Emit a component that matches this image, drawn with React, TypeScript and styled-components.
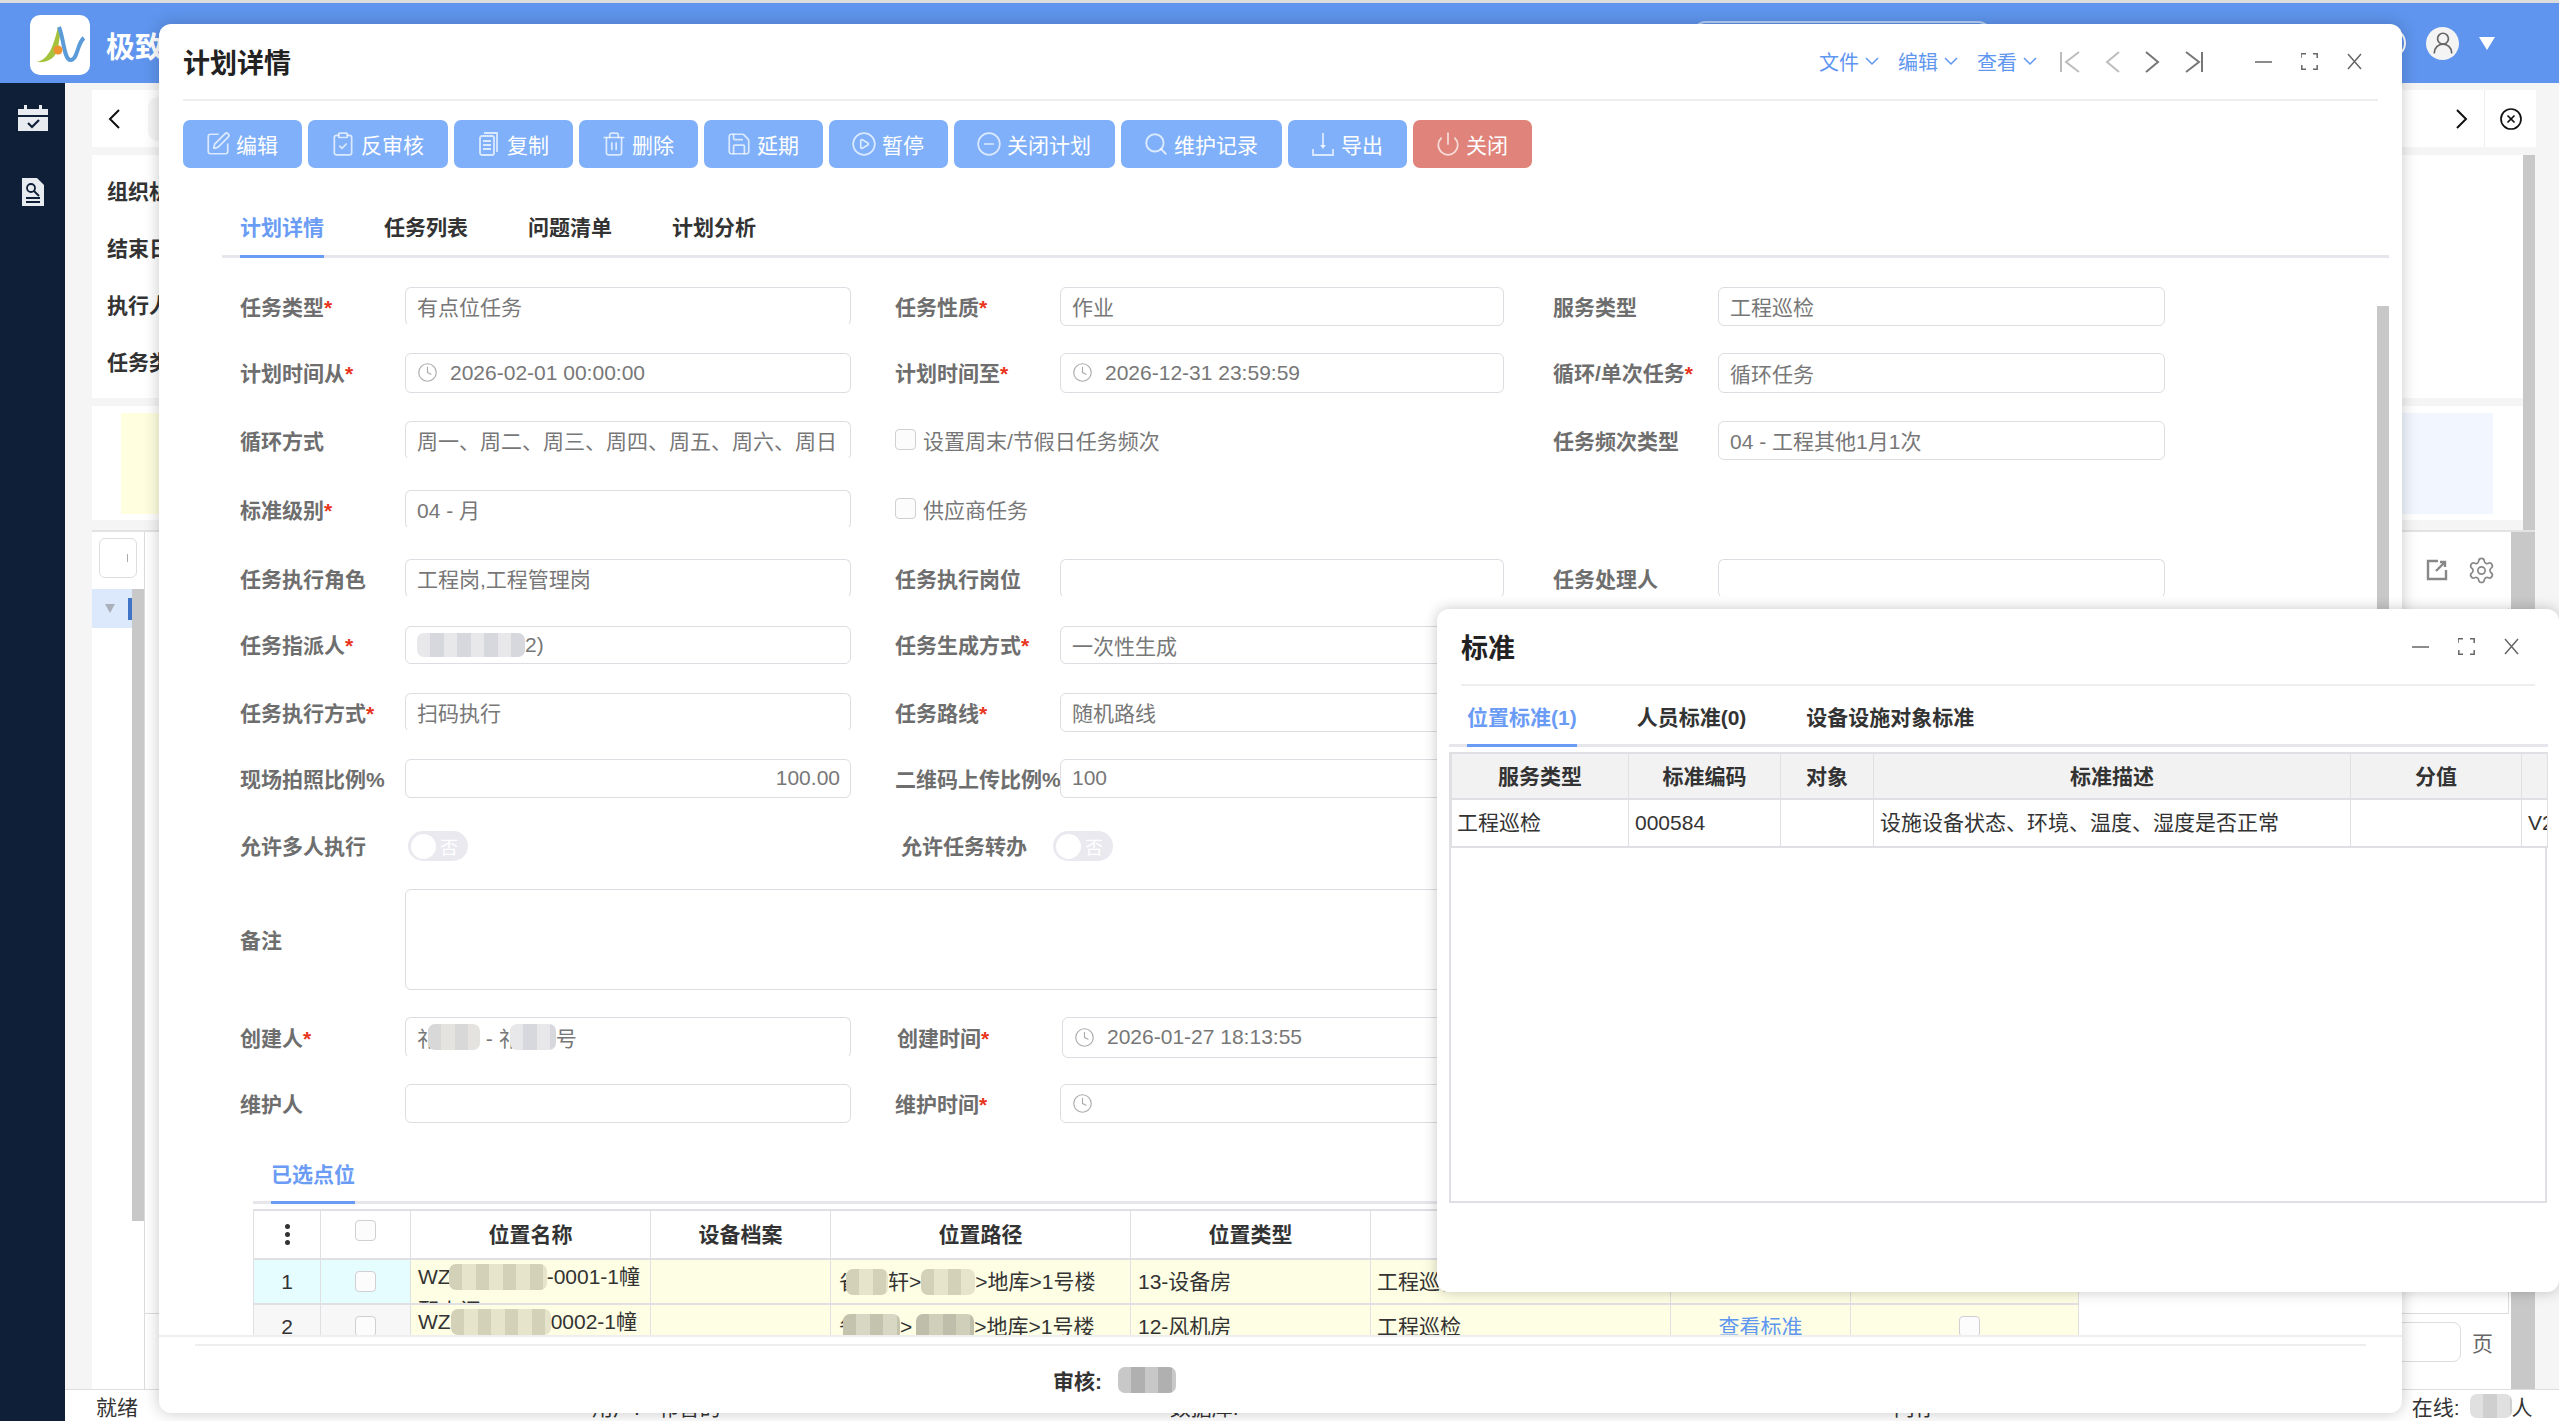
import { FC, ReactNode } from 'react';
import {
  CircleMinus,
  CirclePlay,
  CircleX,
  ClipboardCheck,
  Clock,
  Power,
  Save,
  Search,
  Settings,
  SquarePen,
  Trash2,
  UserRound,
} from 'lucide-react';
import styled, { createGlobalStyle } from 'styled-components';

const GlobalStyle = createGlobalStyle`
  html, body {
    margin: 0;
    padding: 0;
    background: #f5f5f5;
  }
  * {
    box-sizing: border-box;
  }
  body {
    font-family: "Liberation Sans", "Noto Sans CJK SC", sans-serif;
    font-size: 21px;
    color: #333;
  }
`;

const Page = styled.div`
  position: relative;
  display: flex;
  flex-direction: column;
  width: 2559px;
  height: 1421px;
  overflow: hidden;
  background: #f5f5f5;
`;

/* ---------- app shell behind the dialogs ---------- */

const Header = styled.header`
  display: flex;
  flex: none;
  align-items: center;
  height: 83px;
  padding-right: 64px;
  border-top: 3px solid #dcdcdc;
  background: #5f95ee;
`;

const Logo = styled.svg`
  flex: none;
  width: 60px;
  height: 60px;
  margin: 4px 0 0 30px;
`;

const Brand = styled.div`
  margin: 4px 0 0 16px;
  font-size: 29px;
  font-weight: 700;
  color: #fff;
  white-space: nowrap;
`;

const SearchPill = styled.div`
  width: 300px;
  height: 44px;
  margin: 0 384px 0 auto;
  border: 2px solid #b9d2f8;
  border-radius: 14px;
`;

const HeaderDot = styled.div`
  width: 30px;
  height: 30px;
  margin-right: 20px;
  border: 2px solid #fff;
  border-radius: 50%;
`;

const Avatar = styled.div`
  display: flex;
  align-items: center;
  justify-content: center;
  width: 33px;
  height: 33px;
  border-radius: 50%;
  background: #f4f4f4;
  color: #666;
`;

const Caret = styled.div`
  width: 0;
  height: 0;
  margin-left: 20px;
  border-top: 13px solid #fff;
  border-right: 8px solid transparent;
  border-left: 8px solid transparent;
`;

const Body = styled.div`
  display: flex;
  flex: 1;
  min-height: 0;
`;

const Sidebar = styled.nav`
  display: flex;
  flex: none;
  flex-direction: column;
  align-items: center;
  gap: 46px;
  width: 65px;
  padding-top: 22px;
  background: #0f1f38;
`;

const Main = styled.main`
  display: flex;
  flex: 1;
  flex-direction: column;
  min-width: 0;
`;

const TabStrip = styled.div`
  display: flex;
  flex: none;
  align-items: center;
  height: 57px;
  margin: 7px 23px 8px 27px;
  background: #fff;
`;

const BackArrow = styled.svg`
  margin-left: 16px;
`;

const TabChip = styled.div`
  width: 100px;
  height: 44px;
  margin-left: 28px;
  border-radius: 10px;
  background: #f5f5f5;
`;

const StripSpacer = styled.div`
  flex: 1;
`;

const StripEnd = styled.div`
  display: flex;
  align-items: center;
  justify-content: center;
  width: 52px;
  height: 100%;
  margin-left: 16px;
  border-left: 1px solid #eee;
  color: #111;
`;

const UpperArea = styled.div`
  display: flex;
  flex: none;
  height: 375px;
  margin: 0 24px 0 27px;
`;

const UpperPanels = styled.div`
  display: flex;
  flex: 1;
  flex-direction: column;
  min-width: 0;
`;

const SearchPanel = styled.div`
  display: flex;
  flex: none;
  flex-direction: column;
  height: 243px;
  margin-bottom: 8px;
  padding: 20px 0 0 15px;
  background: #fff;
  overflow: hidden;
`;

const SearchLabel = styled.div`
  flex: none;
  height: 57px;
  line-height: 34px;
  font-weight: 700;
  color: #333;
`;

const SummaryPanel = styled.div`
  display: flex;
  justify-content: space-between;
  height: 114px;
  padding: 7px 30px 6px 29px;
  background: #fff;
`;

const SummaryBox = styled.div<{ $color: string }>`
  width: 120px;
  background: ${({ $color }) => $color};
`;

const ScrollTrack = styled.div<{ $w: number }>`
  flex: none;
  width: ${({ $w }) => $w}px;
  background: #c8c8c8;
`;

const Workspace = styled.div`
  display: flex;
  flex: 1;
  min-height: 0;
  margin: 0 24px 0 27px;
  border-top: 2px solid #e3e3e3;
`;

const TreePane = styled.div`
  position: relative;
  flex: none;
  width: 53px;
  padding-top: 6px;
  border-right: 1px solid #ddd;
  background: #fff;
`;

const TreeButton = styled.div`
  display: flex;
  align-items: center;
  justify-content: flex-end;
  width: 38px;
  height: 40px;
  margin-left: 7px;
  padding-right: 8px;
  border: 1px solid #ddd;
  border-radius: 6px;

  &::after {
    width: 1px;
    height: 8px;
    background: #aaa;
    content: '';
  }
`;

const TreeRow = styled.div`
  display: flex;
  align-items: center;
  justify-content: space-between;
  width: 40px;
  height: 39px;
  margin-top: 11px;
  padding-left: 13px;
  background: #dce9fc;
`;

const TreeCaret = styled.div`
  width: 0;
  height: 0;
  border-top: 9px solid #a9b0ba;
  border-right: 5px solid transparent;
  border-left: 5px solid transparent;
`;

const TreeMark = styled.div`
  width: 4px;
  height: 22px;
  background: #3f74c9;
`;

const TreeScroll = styled.div`
  position: absolute;
  top: 57px;
  right: 0;
  width: 12px;
  height: 632px;
  background: #c8c8c8;
`;

const ContentPane = styled.div`
  display: flex;
  flex: 1;
  flex-direction: column;
  min-width: 0;
  background: #fff;
`;

const ToolIcons = styled.div`
  display: flex;
  flex: none;
  align-items: center;
  justify-content: flex-end;
  gap: 19px;
  height: 76px;
  padding: 0 15px 0 0;
  color: #888;
`;

const ListBox = styled.div`
  flex: 1;
  margin-right: 2px;
  border-right: 1px solid #ddd;
  border-bottom: 1px solid #ddd;
`;

const Pager = styled.div`
  display: flex;
  flex: none;
  align-items: center;
  gap: 11px;
  justify-content: flex-end;
  height: 75px;
  padding: 0 18px 19px 0;
  color: #666;
`;

const PagerInput = styled.div`
  width: 200px;
  height: 40px;
  border: 1px solid #ddd;
  border-radius: 8px;
`;

const StatusBar = styled.footer`
  display: flex;
  flex: none;
  align-items: center;
  height: 32px;
  padding-left: 31px;
  border-top: 1px solid #ddd;
  background: #fff;
  color: #333;
  white-space: nowrap;
`;

const StatusItem = styled.span<{ $ml?: number }>`
  margin-left: ${({ $ml = 0 }) => $ml}px;
`;

/* ---------- floating windows ---------- */

const Dialog = styled.section`
  position: absolute;
  top: 24px;
  left: 159px;
  display: flex;
  flex-direction: column;
  width: 2243px;
  height: 1389px;
  border-radius: 12px;
  background: #fff;
  box-shadow: 0 0 16px rgba(0, 0, 0, 0.22);
  overflow: hidden;
`;

const StandardWindow = styled.section`
  position: absolute;
  top: 609px;
  left: 1437px;
  display: flex;
  flex-direction: column;
  width: 1122px;
  height: 683px;
  border-radius: 12px;
  background: #fff;
  box-shadow: 0 0 14px rgba(0, 0, 0, 0.22);
  overflow: hidden;
`;

const WindowHead = styled.div`
  display: flex;
  flex: none;
  align-items: center;
  height: 77px;
  margin: 0 24px;
  border-bottom: 2px solid #eee;
`;

const WindowTitle = styled.h2`
  flex: 1;
  margin: 0;
  font-size: 27px;
  font-weight: 700;
  color: #222;
`;

const MenuLink = styled.div`
  display: flex;
  align-items: center;
  gap: 6px;
  margin-right: 19px;
  font-size: 20px;
  color: #5f96f0;
`;

const NavGroup = styled.div`
  display: flex;
  align-items: center;
  gap: 25px;
  margin: 0 52px 0 4px;
`;

const WindowActions = styled.div`
  display: flex;
  align-items: center;
  gap: 29px;
  margin-right: 16px;
  color: #666;
`;

const Toolbar = styled.div`
  display: flex;
  flex: none;
  gap: 6px;
  margin: 19px 0 0 24px;
`;

const ActionButton = styled.button<{ $danger?: boolean }>`
  display: flex;
  align-items: center;
  gap: 7px;
  height: 48px;
  padding: 0 24px;
  border: 0;
  border-radius: 7px;
  background: ${({ $danger }) => ($danger ? '#e0837a' : '#7fb0f9')};
  color: #fff;
  font: inherit;

  svg {
    width: 26px;
    height: 26px;
    margin: 0 -2px;
    color: rgba(255, 255, 255, 0.72);
  }
`;

type TTabBar = {
  $h: number;
  $top: number;
  $left: number;
  $right: number;
  $pad: number;
  $lift: number;
};
const TabBar = styled.div<TTabBar>`
  display: flex;
  flex: none;
  gap: 60px;
  height: ${({ $h }) => $h}px;
  margin: ${({ $top, $right, $left }) => `${$top}px ${$right}px 0 ${$left}px`};
  padding-left: ${({ $pad }) => $pad}px;
  border-bottom: 3px solid #e6e6ec;

  & > div {
    padding-bottom: ${({ $lift }) => $lift}px;
  }
`;

const Tab = styled.div<{ $active?: boolean }>`
  display: flex;
  align-items: center;
  height: calc(100% + 3px);
  border-bottom: 3px solid ${({ $active }) => ($active ? '#6b9cf5' : 'transparent')};
  font-weight: 700;
  color: ${({ $active }) => ($active ? '#6b9cf5' : '#333')};
  white-space: nowrap;
`;

const ScrollBody = styled.div`
  position: relative;
  flex: 1;
  min-height: 0;
  overflow: hidden;
`;

const ScrollThumb = styled.div`
  position: absolute;
  top: 48px;
  right: 13px;
  width: 12px;
  height: 880px;
  background: #c8c8c8;
`;

const Form = styled.div`
  display: flex;
  flex-direction: column;
  padding: 29px 0 0 81px;
`;

const FormRow = styled.div<{ $h: number; $gap: number }>`
  display: grid;
  flex: none;
  grid-template-columns: 655px 658px 612px;
  height: ${({ $h }) => $h}px;
  margin-bottom: ${({ $gap }) => $gap}px;
`;

const Field = styled.div<{ $wide?: boolean; $nudge?: number }>`
  display: grid;
  grid-column: ${({ $wide }) => ($wide ? '1 / -1' : 'auto')};
  grid-template-columns: 165px 1fr;
  align-items: center;
  margin-left: ${({ $nudge = 0 }) => $nudge}px;
  padding-right: ${({ $wide }) => ($wide ? '47px' : '0')};

  &:nth-child(1) {
    padding-right: ${({ $wide }) => ($wide ? '47px' : '44px')};
  }
  &:nth-child(2) {
    padding-right: 49px;
  }
  &:nth-child(3) {
    width: 612px;
  }
`;

const Label = styled.label<{ $inset?: number }>`
  padding-bottom: 2px;
  padding-left: ${({ $inset = 0 }) => $inset}px;
  font-weight: 700;
  color: #6e6e6e;
  white-space: nowrap;
`;

const Required = styled.span`
  font-weight: 700;
  color: #e8341c;
`;

const InputBox = styled.div<{ $open?: boolean; $right?: boolean }>`
  display: flex;
  align-items: center;
  justify-content: ${({ $right }) => ($right ? 'flex-end' : 'flex-start')};
  gap: 12px;
  height: 100%;
  padding: 0 ${({ $right }) => ($right ? '10px' : '11px')} 1px 11px;
  border: 1px solid #dcdce2;
  border-bottom-color: ${({ $open }) => ($open ? 'transparent' : '#dcdce2')};
  border-radius: 6px;
  color: #777;
  white-space: nowrap;
  overflow: hidden;

  svg {
    flex: none;
    color: #aaa;
  }
`;

const InputText = styled.span`
  display: inline-flex;
  align-items: center;
`;

const CheckRow = styled.div`
  display: flex;
  grid-column: 1 / -1;
  align-items: center;
  gap: 7px;
  padding-bottom: 2px;
  color: #777;
`;

const Check = styled.span<{ $ml?: number }>`
  display: inline-block;
  flex: none;
  width: 21px;
  height: 21px;
  margin-left: ${({ $ml = 0 }) => $ml}px;
  border: 1px solid #cfcfd4;
  border-radius: 4px;
  background: #fcfcfc;
`;

const Toggle = styled.div<{ $shift?: number }>`
  display: flex;
  align-items: center;
  justify-content: space-between;
  width: 60px;
  height: 30px;
  margin-left: ${({ $shift = 3 }) => $shift}px;
  padding: 0 10px 0 3px;
  border-radius: 15px;
  background: #e9e9ef;
  color: #fff;
  font-size: 18px;
`;

const ToggleKnob = styled.span`
  width: 25px;
  height: 25px;
  border-radius: 50%;
  background: #fff;
`;

const Blur = styled.span<{ $w: number; $ml?: number; $a: string; $b: string; $h?: number }>`
  display: inline-block;
  flex: none;
  width: ${({ $w }) => $w}px;
  height: ${({ $h = 26 }) => $h}px;
  margin-left: ${({ $ml = 0 }) => $ml}px;
  border-radius: 7px;
  background-color: ${({ $a }) => $a};
  background-image: repeating-linear-gradient(
    90deg,
    ${({ $b }) => $b} 0 13px,
    transparent 13px 27px
  );
  vertical-align: middle;
`;

const GridWrap = styled.div<{ $w: number; $left: number; $top: number }>`
  flex: none;
  width: ${({ $w }) => $w}px;
  margin: ${({ $top, $left }) => `${$top}px 0 0 ${$left}px`};
`;

const GridTable = styled.table`
  width: 100%;
  border-collapse: collapse;
  table-layout: fixed;
`;

const HeadCell = styled.th<{ $shaded?: boolean; $h: number }>`
  height: ${({ $h }) => $h}px;
  padding: 0 0 3px;
  border: 2px solid #e0e0e4;
  border-width: 2px 1px;
  background: ${({ $shaded }) => ($shaded ? '#f2f2f2' : '#fff')};
  font-weight: 700;
  color: #333;
  text-align: center;
  vertical-align: middle;
`;

const Cell = styled.td<{ $bg?: string; $center?: boolean }>`
  padding: 0;
  border: 1px solid #e0e0e4;
  border-bottom-width: 2px;
  background: ${({ $bg }) => $bg || '#fff'};
  color: #333;
  text-align: ${({ $center }) => ($center ? 'center' : 'left')};
`;

const CellBody = styled.div<{ $h: number; $pad?: number; $top?: boolean }>`
  display: flex;
  flex-wrap: ${({ $top }) => ($top ? 'wrap' : 'nowrap')};
  align-items: ${({ $top }) => ($top ? 'flex-start' : 'center')};
  align-content: flex-start;
  justify-content: ${({ $pad }) => ($pad === undefined ? 'center' : 'flex-start')};
  height: ${({ $h }) => $h}px;
  padding-left: ${({ $pad = 0 }) => $pad}px;
  line-height: 34px;
  white-space: nowrap;
  overflow: hidden;
`;

const LinkText = styled.span`
  color: #5f96f0;
`;

const MoreDots = styled.span`
  display: inline-flex;
  flex-direction: column;
  gap: 3px;
  vertical-align: middle;

  i {
    display: block;
    width: 5px;
    height: 5px;
    border-radius: 50%;
    background: #333;
  }
`;

const DialogFooter = styled.div`
  flex: none;
  height: 78px;
  padding: 7px 36px 0;
  border-top: 2px solid #eee;
`;

const FooterInner = styled.div`
  display: flex;
  align-items: center;
  gap: 6px;
  height: 69px;
  padding-left: 858px;
  border-top: 2px solid #eee;
  font-weight: 700;
  color: #333;
`;

const StandardGrid = styled.div`
  flex: none;
  width: 1098px;
  height: 451px;
  margin: 5px 0 0 12px;
  border: 2px solid #e0e0e4;
  border-top: 0;
`;

/* ---------- drawings ---------- */

const Line: FC<{ w: number; h: number; d: string; color?: string; sw?: number }> = ({
  w,
  h,
  d,
  color = 'currentColor',
  sw = 1.5,
}) => (
  <svg width={w} height={h} viewBox={`0 0 ${w} ${h}`} fill="none" stroke={color} strokeWidth={sw}>
    <path d={d} />
  </svg>
);

const CopyIcon = () => (
  <svg viewBox="0 0 26 26" fill="none" stroke="currentColor" strokeWidth="1.8">
    <path d="M8 2h13v19" />
    <rect x="4" y="5" width="14" height="19" rx="2" />
    <path d="M7 10h8M7 14h8M7 18h8" />
  </svg>
);

const ExportIcon = () => (
  <svg viewBox="0 0 26 26" fill="none" stroke="currentColor" strokeWidth="1.8">
    <path d="M13 2v14" />
    <path d="M10 14h6l-3 4z" fill="currentColor" stroke="none" />
    <path d="M3 18v6h20v-6" />
  </svg>
);

const CalendarIcon = () => (
  <svg width="30" height="27" viewBox="0 0 30 27">
    <path d="M0 4h6V0h3v4h12V0h3v4h6v6H0z" fill="#e8ebf0" />
    <path d="M0 12h30v14H0z" fill="#e8ebf0" />
    <path d="M10 18l4 4 7-7" fill="none" stroke="#0f1f38" strokeWidth="2.2" />
  </svg>
);

const ReportIcon = () => (
  <svg width="22" height="28" viewBox="0 0 22 28">
    <path d="M0 0h15l7 7v21H0z" fill="#e8ebf0" />
    <circle cx="9" cy="10" r="4" fill="none" stroke="#0f1f38" strokeWidth="1.8" />
    <path d="M12 13l5 5M4 20h14M4 24h14" stroke="#0f1f38" strokeWidth="1.8" />
  </svg>
);

const OpenIcon = () => (
  <svg width="22" height="22" viewBox="0 0 22 22" fill="none" stroke="currentColor" strokeWidth="2.4">
    <path d="M12 2H2v18h18v-9" />
    <path d="M10 12l8-8M14 3h5v5" />
  </svg>
);

const WindowButtons = () => (
  <WindowActions>
    <Line w={17} h={4} d="M0 2h17" />
    <Line
      w={17}
      h={17}
      d="M0 5V.8h5M12 .8h4.2V5M16.2 12v4.2H12M5 16.2H.8V12"
    />
    <Line w={15} h={17} d="M1 1l13 15M14 1L1 16" />
  </WindowActions>
);

/* ---------- data ---------- */

const buttons: { text: string; icon: ReactNode; danger?: boolean }[] = [
  { text: '编辑', icon: <SquarePen strokeWidth={1.6} /> },
  { text: '反审核', icon: <ClipboardCheck strokeWidth={1.6} /> },
  { text: '复制', icon: <CopyIcon /> },
  { text: '删除', icon: <Trash2 strokeWidth={1.6} /> },
  { text: '延期', icon: <Save strokeWidth={1.6} /> },
  { text: '暂停', icon: <CirclePlay strokeWidth={1.6} /> },
  { text: '关闭计划', icon: <CircleMinus strokeWidth={1.6} /> },
  { text: '维护记录', icon: <Search strokeWidth={1.8} /> },
  { text: '导出', icon: <ExportIcon /> },
  { text: '关闭', icon: <Power strokeWidth={1.6} />, danger: true },
];

type TInput = {
  label: string;
  required?: boolean;
  value?: ReactNode;
  date?: boolean;
  open?: boolean;
  right?: boolean;
  nudge?: number;
};

const gray = { $a: '#d6d8de', $b: '#e8e8ea' };
const pale = { $a: '#e4e3e0', $b: '#d8d8d8' };

const input = (
  label: string,
  value?: ReactNode,
  opts: Partial<TInput> = {},
): TInput => ({ label, value, ...opts });

const req = { required: true };

type TRow = {
  h: number;
  gap: number;
  inputs?: (TInput | null)[];
  checks?: [TInput, string | null];
};

const rows: TRow[] = [
  {
    h: 39,
    gap: 27,
    inputs: [
      input('任务类型', '有点位任务', { ...req, open: true }),
      input('任务性质', '作业', req),
      input('服务类型', '工程巡检'),
    ],
  },
  {
    h: 40,
    gap: 28,
    inputs: [
      input('计划时间从', '2026-02-01 00:00:00', { ...req, date: true }),
      input('计划时间至', '2026-12-31 23:59:59', { ...req, date: true }),
      input('循环/单次任务', '循环任务', req),
    ],
  },
  {
    h: 39,
    gap: 30,
    checks: [
      input('循环方式', '周一、周二、周三、周四、周五、周六、周日', { open: true }),
      '设置周末/节假日任务频次',
    ],
    inputs: [input('任务频次类型', '04 - 工程其他1月1次')],
  },
  {
    h: 39,
    gap: 30,
    checks: [input('标准级别', '04 - 月', { ...req, open: true }), '供应商任务'],
    inputs: [null],
  },
  {
    h: 39,
    gap: 28,
    inputs: [
      input('任务执行角色', '工程岗,工程管理岗', { open: true }),
      input('任务执行岗位', undefined, { open: true }),
      input('任务处理人', undefined, { open: true }),
    ],
  },
  {
    h: 38,
    gap: 29,
    inputs: [
      input(
        '任务指派人',
        <InputText>
          <Blur $w={108} $h={24} {...gray} />
          2)
        </InputText>,
        req,
      ),
      input('任务生成方式', '一次性生成', req),
    ],
  },
  {
    h: 39,
    gap: 27,
    inputs: [
      input('任务执行方式', '扫码执行', { ...req, open: true }),
      input('任务路线', '随机路线', req),
    ],
  },
  {
    h: 39,
    gap: 32,
    inputs: [
      input('现场拍照比例%', '100.00', { right: true }),
      input('二维码上传比例%', '100'),
    ],
  },
];

const lowerRows: { h: number; gap: number; inputs: TInput[] }[] = [
  {
    h: 41,
    gap: 26,
    inputs: [
      input(
        '创建人',
        <InputText>
          祁
          <Blur $w={52} $ml={-10} {...pale} />
          <span>&nbsp;-&nbsp;祁</span>
          <Blur $w={46} $ml={-10} {...gray} />号
        </InputText>,
        { ...req, open: true },
      ),
      input('创建时间', '2026-01-27 18:13:55', { ...req, date: true, nudge: 2 }),
    ],
  },
  {
    h: 39,
    gap: 24,
    inputs: [input('维护人'), input('维护时间', undefined, { ...req, date: true })],
  },
];

const cream = { $a: '#e6e5cc', $b: '#d3d2b8' };
const YELLOW = '#fefee4';

const pointColumns = [67, 90, 240, 180, 300, 240, 300, 180, 228];
const pointHeads = ['位置名称', '设备档案', '位置路径', '位置类型', '服务类型', '', ''];

const standardColumns = [177, 152, 93, 477, 171, 26];

const FormInput: FC<{ item: TInput }> = ({ item }) => (
  <>
    <Label>
      {item.label}
      {item.required && <Required>*</Required>}
    </Label>
    <InputBox $open={item.open} $right={item.right}>
      {item.date && <Clock size={21} strokeWidth={1.3} />}
      {item.value}
    </InputBox>
  </>
);

const App: FC = () => {
  return (
    <Page>
      <GlobalStyle />
      <Header>
        <Logo viewBox="0 0 60 60">
          <rect width="60" height="60" rx="10" fill="#fff" />
          <path d="M28 12C24 28 20 44 7 47c11 1 19-4 21-14l3-19z" fill="#a6c23c" />
          <path
            d="M29 12c5 12 5 34 12 33 7-1 6-17 13-22"
            fill="none"
            stroke="#5b9bd8"
            strokeWidth="4"
          />
          <circle cx="28" cy="35" r="4.5" fill="#ee9330" />
        </Logo>
        <Brand>极致运维</Brand>
        <SearchPill />
        <HeaderDot />
        <Avatar>
          <UserRound size={26} strokeWidth={1.6} />
        </Avatar>
        <Caret />
      </Header>
      <Body>
        <Sidebar>
          <CalendarIcon />
          <ReportIcon />
        </Sidebar>
        <Main>
          <TabStrip>
            <BackArrow width="12" height="20" viewBox="0 0 12 20" fill="none" stroke="#111" strokeWidth="2">
              <path d="M11 1L2 10l9 9" />
            </BackArrow>
            <TabChip />
            <StripSpacer />
            <Line w={12} h={20} d="M1 1l9 9-9 9" color="#111" sw={2} />
            <StripEnd>
              <CircleX size={24} strokeWidth={1.7} />
            </StripEnd>
          </TabStrip>
          <UpperArea>
            <UpperPanels>
              <SearchPanel>
                <SearchLabel>组织机构</SearchLabel>
                <SearchLabel>结束日期</SearchLabel>
                <SearchLabel>执行人</SearchLabel>
                <SearchLabel>任务类型</SearchLabel>
              </SearchPanel>
              <SummaryPanel>
                <SummaryBox $color="#ffffe0" />
                <SummaryBox $color="#f2f7ff" />
              </SummaryPanel>
            </UpperPanels>
            <ScrollTrack $w={12} />
          </UpperArea>
          <Workspace>
            <TreePane>
              <TreeButton />
              <TreeRow>
                <TreeCaret />
                <TreeMark />
              </TreeRow>
              <TreeScroll />
            </TreePane>
            <ContentPane>
              <ToolIcons>
                <OpenIcon />
                <Settings size={29} strokeWidth={1.4} />
              </ToolIcons>
              <ListBox />
              <Pager>
                <PagerInput />页
              </Pager>
            </ContentPane>
            <ScrollTrack $w={24} />
          </Workspace>
          <StatusBar>
            <StatusItem>就绪</StatusItem>
            <StatusItem $ml={454}>用户:</StatusItem>
            <StatusItem $ml={18}>祁普的</StatusItem>
            <StatusItem $ml={449}>数据库:</StatusItem>
            <StatusItem $ml={655}>内存</StatusItem>
            <StatusItem $ml={476}>在线:</StatusItem>
            <Blur $w={42} $h={24} $ml={10} $a="#cfcfcf" $b="#e0e0e0" />
            人
          </StatusBar>
        </Main>
      </Body>

      <Dialog>
        <WindowHead>
          <WindowTitle>计划详情</WindowTitle>
          {['文件', '编辑', '查看'].map((menu) => (
            <MenuLink key={menu}>
              {menu}
              <Line w={14} h={9} d="M1 1l6 6 6-6" />
            </MenuLink>
          ))}
          <NavGroup>
            <Line w={20} h={22} d="M1 1v20M19 1L6 11l13 10" color="#bdbdbd" sw={2} />
            <Line w={15} h={22} d="M14 1L2 11l12 10" color="#bdbdbd" sw={2} />
            <Line w={15} h={22} d="M1 1l12 10L1 21" color="#777" sw={2} />
            <Line w={18} h={22} d="M1 1l13 10L1 21M17 1v20" color="#777" sw={2} />
          </NavGroup>
          <WindowButtons />
        </WindowHead>
        <Toolbar>
          {buttons.map((btn) => (
            <ActionButton key={btn.text} $danger={btn.danger}>
              {btn.icon}
              {btn.text}
            </ActionButton>
          ))}
        </Toolbar>
        <TabBar $h={54} $top={36} $left={63} $right={13} $pad={18} $lift={7}>
          <Tab $active>计划详情</Tab>
          <Tab>任务列表</Tab>
          <Tab>问题清单</Tab>
          <Tab>计划分析</Tab>
        </TabBar>
        <ScrollBody>
          <ScrollThumb />
          <Form>
            {rows.map((row, rowIndex) => (
              <FormRow key={rowIndex} $h={row.h} $gap={row.gap}>
                {row.checks && (
                  <>
                    <Field>
                      <FormInput item={row.checks[0]} />
                    </Field>
                    <Field>
                      <CheckRow>
                        <Check />
                        {row.checks[1]}
                      </CheckRow>
                    </Field>
                  </>
                )}
                {row.inputs?.map((item, i) => (
                  <Field key={i}>{item && <FormInput item={item} />}</Field>
                ))}
              </FormRow>
            ))}
            <FormRow $h={30} $gap={29}>
              <Field>
                <Label>允许多人执行</Label>
                <Toggle>
                  <ToggleKnob />否
                </Toggle>
              </Field>
              <Field>
                <Label $inset={6}>允许任务转办</Label>
                <Toggle $shift={-7}>
                  <ToggleKnob />否
                </Toggle>
              </Field>
            </FormRow>
            <FormRow $h={101} $gap={27}>
              <Field $wide>
                <Label>备注</Label>
                <InputBox />
              </Field>
            </FormRow>
            {lowerRows.map((row) => (
              <FormRow key={row.inputs[0].label} $h={row.h} $gap={row.gap}>
                {row.inputs.map((item) => (
                  <Field key={item.label} $nudge={item.nudge}>
                    <FormInput item={item} />
                  </Field>
                ))}
              </FormRow>
            ))}
          </Form>
          <TabBar $h={57} $top={0} $left={94} $right={24} $pad={18} $lift={3}>
            <Tab $active>已选点位</Tab>
          </TabBar>
          <GridWrap $w={1825} $left={94} $top={5}>
            <GridTable>
              <colgroup>
                {pointColumns.map((w, i) => (
                  <col key={i} style={{ width: w }} />
                ))}
              </colgroup>
              <thead>
                <tr>
                  <HeadCell $h={49}>
                    <MoreDots>
                      <i />
                      <i />
                      <i />
                    </MoreDots>
                  </HeadCell>
                  <HeadCell $h={49}>
                    <Check />
                  </HeadCell>
                  {pointHeads.map((head, i) => (
                    <HeadCell key={i} $h={49}>
                      {head}
                    </HeadCell>
                  ))}
                </tr>
              </thead>
              <tbody>
                <tr>
                  <Cell $bg="#e6fdff" $center>
                    <CellBody $h={43}>1</CellBody>
                  </Cell>
                  <Cell $bg="#e6fdff" $center>
                    <CellBody $h={43}>
                      <Check />
                    </CellBody>
                  </Cell>
                  <Cell $bg={YELLOW}>
                    <CellBody $h={43} $pad={7} $top>
                      <InputText>
                        WZ
                        <Blur $w={98} $ml={-2} {...cream} />
                        -0001-1幢
                      </InputText>
                      <span>配电间</span>
                    </CellBody>
                  </Cell>
                  <Cell $bg={YELLOW} />
                  <Cell $bg={YELLOW}>
                    <CellBody $h={43} $pad={8}>
                      省
                      <Blur $w={42} $ml={-14} {...cream} />
                      轩&gt;
                      <Blur $w={54} {...cream} />
                      &gt;地库&gt;1号楼
                    </CellBody>
                  </Cell>
                  <Cell $bg={YELLOW}>
                    <CellBody $h={43} $pad={7}>
                      13-设备房
                    </CellBody>
                  </Cell>
                  <Cell $bg={YELLOW}>
                    <CellBody $h={43} $pad={6}>
                      工程巡检
                    </CellBody>
                  </Cell>
                  <Cell $bg={YELLOW} $center>
                    <CellBody $h={43}>
                      <LinkText>查看标准</LinkText>
                    </CellBody>
                  </Cell>
                  <Cell $bg={YELLOW} $center>
                    <CellBody $h={43}>
                      <Check $ml={10} />
                    </CellBody>
                  </Cell>
                </tr>
                <tr>
                  <Cell $bg="#f7f7f7" $center>
                    <CellBody $h={43}>2</CellBody>
                  </Cell>
                  <Cell $bg="#f7f7f7" $center>
                    <CellBody $h={43}>
                      <Check />
                    </CellBody>
                  </Cell>
                  <Cell $bg={YELLOW}>
                    <CellBody $h={43} $pad={7} $top>
                      <InputText>
                        WZ
                        <Blur $w={100} {...cream} />
                        0002-1幢
                      </InputText>
                    </CellBody>
                  </Cell>
                  <Cell $bg={YELLOW} />
                  <Cell $bg={YELLOW}>
                    <CellBody $h={43} $pad={8}>
                      省
                      <Blur $w={57} $ml={-17} $a="#d8d7c4" $b="#c4c3ae" />
                      &gt;
                      <Blur $w={58} $ml={4} $a="#d0cfba" $b="#bfbeaa" />
                      &gt;地库&gt;1号楼
                    </CellBody>
                  </Cell>
                  <Cell $bg={YELLOW}>
                    <CellBody $h={43} $pad={7}>
                      12-风机房
                    </CellBody>
                  </Cell>
                  <Cell $bg={YELLOW}>
                    <CellBody $h={43} $pad={6}>
                      工程巡检
                    </CellBody>
                  </Cell>
                  <Cell $bg={YELLOW} $center>
                    <CellBody $h={43}>
                      <LinkText>查看标准</LinkText>
                    </CellBody>
                  </Cell>
                  <Cell $bg={YELLOW} $center>
                    <CellBody $h={43}>
                      <Check $ml={10} />
                    </CellBody>
                  </Cell>
                </tr>
              </tbody>
            </GridTable>
          </GridWrap>
        </ScrollBody>
        <DialogFooter>
          <FooterInner>
            审核:
            <Blur $w={58} $ml={10} $a="#b0b0b0" $b="#c8c8c8" />
          </FooterInner>
        </DialogFooter>
      </Dialog>

      <StandardWindow>
        <WindowHead>
          <WindowTitle>标准</WindowTitle>
          <WindowButtons />
        </WindowHead>
        <TabBar $h={59} $top={2} $left={12} $right={11} $pad={18} $lift={0}>
          <Tab $active>位置标准(1)</Tab>
          <Tab>人员标准(0)</Tab>
          <Tab>设备设施对象标准</Tab>
        </TabBar>
        <StandardGrid>
          <GridTable>
            <colgroup>
              {standardColumns.map((w, i) => (
                <col key={i} style={{ width: w }} />
              ))}
            </colgroup>
            <thead>
              <tr>
                {['服务类型', '标准编码', '对象', '标准描述', '分值', ''].map((head, i) => (
                  <HeadCell key={i} $shaded $h={46}>
                    {head}
                  </HeadCell>
                ))}
              </tr>
            </thead>
            <tbody>
              <tr>
                <Cell>
                  <CellBody $h={46} $pad={5}>
                    工程巡检
                  </CellBody>
                </Cell>
                <Cell>
                  <CellBody $h={46} $pad={6}>
                    000584
                  </CellBody>
                </Cell>
                <Cell />
                <Cell>
                  <CellBody $h={46} $pad={6}>
                    设施设备状态、环境、温度、湿度是否正常
                  </CellBody>
                </Cell>
                <Cell />
                <Cell>
                  <CellBody $h={46} $pad={6}>
                    V2
                  </CellBody>
                </Cell>
              </tr>
            </tbody>
          </GridTable>
        </StandardGrid>
      </StandardWindow>
    </Page>
  );
};

export default App;
